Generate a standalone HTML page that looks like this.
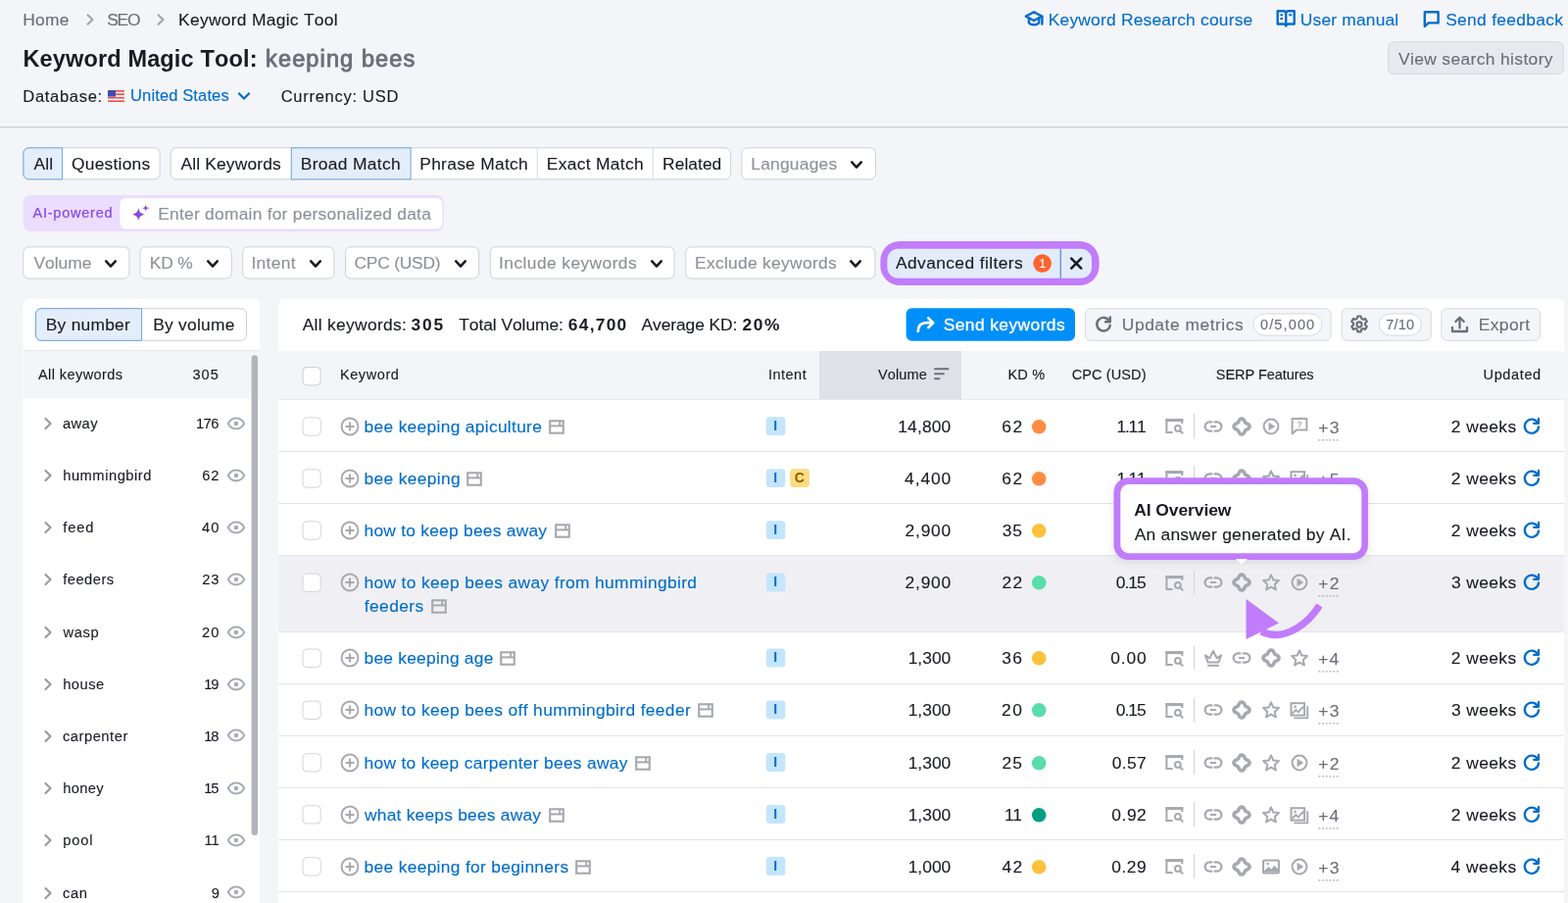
<!DOCTYPE html>
<html lang="en"><head><meta charset="utf-8"><title>Keyword Magic Tool: keeping bees</title>
<style>
html,body{margin:0;padding:0}
body{width:1600px;height:921px;overflow:hidden;background:#f4f5f9;font-family:"Liberation Sans",sans-serif;color:#191b23}
#root{will-change:transform;position:relative;width:1600px;height:921px;overflow:hidden;background:#f4f5f9}
.t{position:absolute;white-space:nowrap;line-height:1;font-size:17.4px;font-kerning:none;-webkit-text-stroke:0.12px}
.b{position:absolute;box-sizing:border-box}
.i{position:absolute;overflow:visible}

</style></head>
<body>
<div id="root">
<span class="t" style="left:23.27px;top:12px;letter-spacing:0.229px;color:#6c6e79">Home</span>
<svg class="i" style="left:83.6px;top:12.1px;" width="16" height="16" viewBox="0 0 16 16"><path d="M5.5 3.3 L10.5 8 L5.5 12.7" fill="none" stroke="#a3a5ad" stroke-width="2.1" stroke-linecap="round" stroke-linejoin="round"/></svg>
<span class="t" style="left:109.21px;top:12px;letter-spacing:-1.200px;color:#6c6e79">SEO</span>
<svg class="i" style="left:156.2px;top:12.1px;" width="16" height="16" viewBox="0 0 16 16"><path d="M5.5 3.3 L10.5 8 L5.5 12.7" fill="none" stroke="#a3a5ad" stroke-width="2.1" stroke-linecap="round" stroke-linejoin="round"/></svg>
<span class="t" style="left:182.07px;top:12px;letter-spacing:0.298px">Keyword Magic Tool</span>
<svg class="i" style="left:1044px;top:9px;" width="22" height="20" viewBox="0 0 22 20"><path d="M11 3.2 L19.2 7.6 L11 12 L2.8 7.6 Z" fill="none" stroke="#006dca" stroke-width="2.4" stroke-linejoin="round"/><path d="M5.9 10 V14.4 C7.6 16.8 14.4 16.8 16.1 14.4 V10" fill="none" stroke="#006dca" stroke-width="2.4" stroke-linejoin="round"/><path d="M19.4 8 V15.6" fill="none" stroke="#006dca" stroke-width="2.4" stroke-linecap="round"/></svg>
<span class="t" style="left:1069.77px;top:12px;letter-spacing:0.206px;color:#006dca">Keyword Research course</span>
<svg class="i" style="left:1302px;top:9px;" width="21" height="20" viewBox="0 0 21 20"><path d="M1.7 2.3 H7.6 C9.2 2.3 10.2 3.3 10.2 4.9 V17.6 C10.2 16.3 9.2 15.5 7.6 15.5 H1.7 Z M18.7 2.3 H12.8 C11.2 2.3 10.2 3.3 10.2 4.9 V17.6 C10.2 16.3 11.2 15.5 12.8 15.5 H18.7 Z" fill="none" stroke="#006dca" stroke-width="2.4" stroke-linejoin="round"/><path d="M4.4 6.3h2.6M4.4 10h2.6M13.2 6.3h3" stroke="#006dca" stroke-width="1.9" fill="none"/></svg>
<span class="t" style="left:1326.86px;top:12px;letter-spacing:0.177px;color:#006dca">User manual</span>
<svg class="i" style="left:1451px;top:9px;" width="20" height="20" viewBox="0 0 20 20"><path d="M2.8 3.2 H16.6 V14.4 H6.6 L2.8 17.9 Z" fill="none" stroke="#006dca" stroke-width="2.4" stroke-linejoin="round"/></svg>
<span class="t" style="left:1475.21px;top:12px;letter-spacing:0.306px;color:#006dca">Send feedback</span>
<span class="t" style="left:23.43px;top:49px;font-size:23.5px;letter-spacing:0.151px;font-weight:700;-webkit-text-stroke:0">Keyword Magic Tool:</span>
<span class="t" style="left:271.12px;top:49px;font-size:23.5px;letter-spacing:1.121px;color:#6c6e79;-webkit-text-stroke:0.9px #6c6e79">keeping bees</span>
<svg class="i" style="left:1414px;top:40px" width="185" height="40" viewBox="1414 40 185 40"><rect x="1416.5" y="42.7" width="178.8" height="32.8" rx="5.5" fill="#e8e9ee" stroke="#d8dae0" stroke-width="1"/></svg>
<span class="t" style="left:1426.92px;top:52px;letter-spacing:0.381px;color:#6c6e79">View search history</span>
<span class="t" style="left:23.35px;top:90px;font-size:16.5px;letter-spacing:0.693px">Database:</span>
<svg class="i" style="left:110px;top:92px" width="17" height="12" viewBox="0 0 17 12"><rect width="17" height="12" rx="1" fill="#f4f5f9"/><g fill="#ee4c4c"><rect y="0" width="17" height="1.6"/><rect y="3.4" width="17" height="1.6"/><rect y="6.9" width="17" height="1.6"/><rect y="10.4" width="17" height="1.6"/></g><rect width="8" height="6.6" fill="#3d4eb8"/></svg>
<span class="t" style="left:133.03px;top:89px;font-size:16.5px;letter-spacing:0.134px;color:#006dca">United States</span>
<svg class="i" style="left:241.1px;top:90.2px;" width="16" height="16" viewBox="0 0 16 16"><path d="M3.0 5.4 L8 10.6 L13.0 5.4" fill="none" stroke="#006dca" stroke-width="2.2" stroke-linecap="round" stroke-linejoin="round"/></svg>
<span class="t" style="left:286.66px;top:90px;font-size:16.5px;letter-spacing:0.732px">Currency: USD</span>
<svg class="i" style="left:-2px;top:127px" width="1606" height="7" viewBox="-2 127 1606 7"><rect x="0" y="129.15" width="1600" height="1" rx="0" fill="#c4c7cf"/></svg>
<svg class="i" style="left:21px;top:148px" width="146" height="39" viewBox="21 148 146 39"><rect x="23.9" y="150.8" width="139.2" height="32.1" rx="5.5" fill="#fff" stroke="#cdd0d7" stroke-width="1"/><path d="M63.6 150.8 H29.4 a5.5 5.5 0 0 0 -5.5 5.5 V177.4 a5.5 5.5 0 0 0 5.5 5.5 H63.6 Z" fill="#e4eefb" stroke="#6ba6de" stroke-width="1"/></svg>
<span class="t" style="left:34.47px;top:159px;letter-spacing:0.180px">All</span>
<span class="t" style="left:72.98px;top:159px;letter-spacing:0.239px">Questions</span>
<svg class="i" style="left:171px;top:148px" width="578" height="39" viewBox="171 148 578 39"><rect x="174.2" y="150.8" width="571.2" height="32.1" rx="5.5" fill="#fff" stroke="#cdd0d7" stroke-width="1"/><rect x="297.3" y="150.8" width="121.8" height="32.1" fill="#e4eefb" stroke="#6ba6de" stroke-width="1"/><path d="M548.4 151.3 V182.4 M666.2 151.3 V182.4" stroke="#d8dae1" stroke-width="1"/></svg>
<span class="t" style="left:184.47px;top:159px;letter-spacing:0.154px">All Keywords</span>
<span class="t" style="left:306.77px;top:159px;letter-spacing:0.331px">Broad Match</span>
<span class="t" style="left:428.27px;top:159px;letter-spacing:0.283px">Phrase Match</span>
<span class="t" style="left:557.87px;top:159px;letter-spacing:0.312px">Exact Match</span>
<span class="t" style="left:676.07px;top:159px;letter-spacing:0.046px">Related</span>
<svg class="i" style="left:754px;top:148px" width="144" height="39" viewBox="754 148 144 39"><rect x="756.8" y="150.8" width="136.7" height="32.1" rx="5.5" fill="#fff" stroke="#cdd0d7" stroke-width="1"/></svg>
<span class="t" style="left:766.27px;top:159px;letter-spacing:0.230px;color:#8e9099">Languages</span>
<svg class="i" style="left:866px;top:160px;" width="16" height="16" viewBox="0 0 16 16"><path d="M3.2 5.4 L8 10.6 L12.8 5.4" fill="none" stroke="#191b23" stroke-width="2.5" stroke-linecap="round" stroke-linejoin="round"/></svg>
<svg class="i" style="left:21px;top:197px" width="436" height="43" viewBox="21 197 436 43"><rect x="23.6" y="199.1" width="429.4" height="36.9" rx="8" fill="#ecdcfd"/></svg>
<span class="t" style="left:33.57px;top:210px;font-size:14.5px;letter-spacing:0.757px;color:#8649e1;font-weight:400;-webkit-text-stroke:0.2px #8649e1">AI-powered</span>
<svg class="i" style="left:120px;top:200px" width="335" height="37" viewBox="120 200 335 37"><rect x="122.4" y="202" width="329.1" height="31.5" rx="6" fill="#fff"/></svg>
<svg class="i" style="left:133.5px;top:208.3px" width="19" height="19" viewBox="0.6 0.4 18 18"><path d="M7.5 4 C8.2 8.3 9.2 9.3 13.5 10.5 C9.2 11.7 8.2 12.7 7.5 17 C6.8 12.7 5.8 11.7 1.5 10.5 C5.8 9.3 6.8 8.3 7.5 4 Z" fill="#8649e1"/><path d="M14.5 1 C14.9 3.3 15.4 3.8 17.8 4.4 C15.4 5 14.9 5.5 14.5 7.8 C14.1 5.5 13.6 5 11.2 4.4 C13.6 3.8 14.1 3.3 14.5 1 Z" fill="#8649e1"/></svg>
<span class="t" style="left:161.27px;top:210px;letter-spacing:0.239px;color:#8e9099">Enter domain for personalized data</span>
<svg class="i" style="left:21px;top:249px" width="115" height="39" viewBox="21 249 115 39"><rect x="23.8" y="251.9" width="108.1" height="32.2" rx="5.5" fill="#fff" stroke="#cdd0d7" stroke-width="1"/></svg>
<span class="t" style="left:34.42px;top:260px;letter-spacing:-0.009px;color:#8e9099">Volume</span>
<svg class="i" style="left:105.4px;top:261.4px;" width="16" height="16" viewBox="0 0 16 16"><path d="M3.2 5.4 L8 10.6 L12.8 5.4" fill="none" stroke="#191b23" stroke-width="2.5" stroke-linecap="round" stroke-linejoin="round"/></svg>
<svg class="i" style="left:140px;top:249px" width="100" height="39" viewBox="140 249 100 39"><rect x="142.9" y="251.9" width="93.4" height="32.2" rx="5.5" fill="#fff" stroke="#cdd0d7" stroke-width="1"/></svg>
<span class="t" style="left:152.87px;top:260px;letter-spacing:-0.210px;color:#8e9099">KD %</span>
<svg class="i" style="left:209.3px;top:261.4px;" width="16" height="16" viewBox="0 0 16 16"><path d="M3.2 5.4 L8 10.6 L12.8 5.4" fill="none" stroke="#191b23" stroke-width="2.5" stroke-linecap="round" stroke-linejoin="round"/></svg>
<svg class="i" style="left:245px;top:249px" width="100" height="39" viewBox="245 249 100 39"><rect x="247.7" y="251.9" width="93.2" height="32.2" rx="5.5" fill="#fff" stroke="#cdd0d7" stroke-width="1"/></svg>
<span class="t" style="left:256.49px;top:260px;letter-spacing:0.300px;color:#8e9099">Intent</span>
<svg class="i" style="left:314.3px;top:261.4px;" width="16" height="16" viewBox="0 0 16 16"><path d="M3.2 5.4 L8 10.6 L12.8 5.4" fill="none" stroke="#191b23" stroke-width="2.5" stroke-linecap="round" stroke-linejoin="round"/></svg>
<svg class="i" style="left:350px;top:249px" width="143" height="39" viewBox="350 249 143 39"><rect x="352.5" y="251.9" width="136.2" height="32.2" rx="5.5" fill="#fff" stroke="#cdd0d7" stroke-width="1"/></svg>
<span class="t" style="left:361.52px;top:260px;letter-spacing:-0.217px;color:#8e9099">CPC (USD)</span>
<svg class="i" style="left:461.5px;top:261.4px;" width="16" height="16" viewBox="0 0 16 16"><path d="M3.2 5.4 L8 10.6 L12.8 5.4" fill="none" stroke="#191b23" stroke-width="2.5" stroke-linecap="round" stroke-linejoin="round"/></svg>
<svg class="i" style="left:497px;top:249px" width="195" height="39" viewBox="497 249 195 39"><rect x="500.3" y="251.9" width="187.8" height="32.2" rx="5.5" fill="#fff" stroke="#cdd0d7" stroke-width="1"/></svg>
<span class="t" style="left:509.09px;top:260px;letter-spacing:0.413px;color:#8e9099">Include keywords</span>
<svg class="i" style="left:661.6px;top:261.4px;" width="16" height="16" viewBox="0 0 16 16"><path d="M3.2 5.4 L8 10.6 L12.8 5.4" fill="none" stroke="#191b23" stroke-width="2.5" stroke-linecap="round" stroke-linejoin="round"/></svg>
<svg class="i" style="left:697px;top:249px" width="200" height="39" viewBox="697 249 200 39"><rect x="699.8" y="251.9" width="193.1" height="32.2" rx="5.5" fill="#fff" stroke="#cdd0d7" stroke-width="1"/></svg>
<span class="t" style="left:709.07px;top:260px;letter-spacing:0.295px;color:#8e9099">Exclude keywords</span>
<svg class="i" style="left:865.3px;top:261.4px;" width="16" height="16" viewBox="0 0 16 16"><path d="M3.2 5.4 L8 10.6 L12.8 5.4" fill="none" stroke="#191b23" stroke-width="2.5" stroke-linecap="round" stroke-linejoin="round"/></svg>
<svg class="i" style="left:890px;top:240px" width="240" height="58" viewBox="890 240 240 58"><rect x="898.3" y="246" width="223.3" height="45" rx="20" fill="#c17cfb"/><rect x="905.4" y="253.7" width="208.6" height="30.1" rx="11" fill="#e2ebfa"/><rect x="1081.6" y="253.7" width="1.4" height="30.1" fill="#5b9bd8"/><path d="M1093.2 263.6 L1103.2 273.6 M1103.2 263.6 L1093.2 273.6" stroke="#191b23" stroke-width="2.6" stroke-linecap="round" fill="none"/><circle cx="1063.6" cy="268.6" r="9.3" fill="#ff642d"/></svg>
<span class="t" style="left:913.97px;top:260px;letter-spacing:0.398px">Advanced filters</span>
<span class="t" style="left:1060.35px;top:263px;font-size:12.5px;letter-spacing:-0.889px;color:#fff">1</span>
<svg class="i" style="left:21px;top:302px" width="248" height="642" viewBox="21 302 248 642"><rect x="23.4" y="304.5" width="241.7" height="635.5" rx="7" fill="#fff"/></svg>
<svg class="i" style="left:34px;top:312px" width="222" height="39" viewBox="34 312 222 39"><rect x="36.5" y="314.7" width="215" height="32.6" rx="5.5" fill="#fff" stroke="#cdd0d7" stroke-width="1"/><path d="M144.6 314.7 H42 a5.5 5.5 0 0 0 -5.5 5.5 V341.8 a5.5 5.5 0 0 0 5.5 5.5 H144.6 Z" fill="#e4eefb" stroke="#6ba6de" stroke-width="1"/></svg>
<span class="t" style="left:46.77px;top:323px;letter-spacing:0.247px">By number</span>
<span class="t" style="left:156.27px;top:323px;letter-spacing:0.234px">By volume</span>
<div class="b" style="left:24px;top:357px;width:241px;height:49.5px;background:#f4f5f9;border-top:1px solid #e6e7ed"></div>
<span class="t" style="left:38.97px;top:375px;font-size:14.5px;letter-spacing:0.433px">All keywords</span>
<span class="t" style="left:196.45px;top:375px;font-size:14.5px;letter-spacing:1.034px">305</span>
<svg class="i" style="left:250px;top:355px" width="20" height="505" viewBox="250 355 20 505"><rect x="256.6" y="362.3" width="6.5" height="489.7" rx="3.2" fill="#b3b4b9"/></svg>
<svg class="i" style="left:40.6px;top:424.3px;" width="16" height="16" viewBox="0 0 16 16"><path d="M5.45 3.1 L10.55 8 L5.45 12.9" fill="none" stroke="#9698a1" stroke-width="2.1" stroke-linecap="round" stroke-linejoin="round"/></svg>
<span class="t" style="left:63.88px;top:425px;font-size:14.7px;letter-spacing:0.479px">away</span>
<span class="t" style="left:199.88px;top:425px;font-size:14.7px;letter-spacing:-0.480px">176</span>
<svg class="i" style="left:231.3px;top:424.9px" width="20" height="14" viewBox="0 0 20 14"><path d="M1.8 7 C3.8 3.3 6.6 1.6 10 1.6 C13.4 1.6 16.2 3.3 18.2 7 C16.2 10.7 13.4 12.4 10 12.4 C6.6 12.4 3.8 10.7 1.8 7 Z" fill="none" stroke="#a9abb6" stroke-width="2" stroke-linejoin="round"/><circle cx="10" cy="7" r="2.3" fill="#a9abb6"/></svg>
<svg class="i" style="left:40.6px;top:477.3px;" width="16" height="16" viewBox="0 0 16 16"><path d="M5.45 3.1 L10.55 8 L5.45 12.9" fill="none" stroke="#9698a1" stroke-width="2.1" stroke-linecap="round" stroke-linejoin="round"/></svg>
<span class="t" style="left:64.18px;top:478px;font-size:14.7px;letter-spacing:0.540px">hummingbird</span>
<span class="t" style="left:206.29px;top:478px;font-size:14.7px;letter-spacing:0.900px">62</span>
<svg class="i" style="left:231.3px;top:477.9px" width="20" height="14" viewBox="0 0 20 14"><path d="M1.8 7 C3.8 3.3 6.6 1.6 10 1.6 C13.4 1.6 16.2 3.3 18.2 7 C16.2 10.7 13.4 12.4 10 12.4 C6.6 12.4 3.8 10.7 1.8 7 Z" fill="none" stroke="#a9abb6" stroke-width="2" stroke-linejoin="round"/><circle cx="10" cy="7" r="2.3" fill="#a9abb6"/></svg>
<svg class="i" style="left:40.6px;top:530.3px;" width="16" height="16" viewBox="0 0 16 16"><path d="M5.45 3.1 L10.55 8 L5.45 12.9" fill="none" stroke="#9698a1" stroke-width="2.1" stroke-linecap="round" stroke-linejoin="round"/></svg>
<span class="t" style="left:64.29px;top:531px;font-size:14.7px;letter-spacing:0.882px">feed</span>
<span class="t" style="left:206.12px;top:531px;font-size:14.7px;letter-spacing:0.900px">40</span>
<svg class="i" style="left:231.3px;top:530.9px" width="20" height="14" viewBox="0 0 20 14"><path d="M1.8 7 C3.8 3.3 6.6 1.6 10 1.6 C13.4 1.6 16.2 3.3 18.2 7 C16.2 10.7 13.4 12.4 10 12.4 C6.6 12.4 3.8 10.7 1.8 7 Z" fill="none" stroke="#a9abb6" stroke-width="2" stroke-linejoin="round"/><circle cx="10" cy="7" r="2.3" fill="#a9abb6"/></svg>
<svg class="i" style="left:40.6px;top:583.3px;" width="16" height="16" viewBox="0 0 16 16"><path d="M5.45 3.1 L10.55 8 L5.45 12.9" fill="none" stroke="#9698a1" stroke-width="2.1" stroke-linecap="round" stroke-linejoin="round"/></svg>
<span class="t" style="left:64.29px;top:584px;font-size:14.7px;letter-spacing:0.468px">feeders</span>
<span class="t" style="left:206.26px;top:584px;font-size:14.7px;letter-spacing:0.834px">23</span>
<svg class="i" style="left:231.3px;top:583.9px" width="20" height="14" viewBox="0 0 20 14"><path d="M1.8 7 C3.8 3.3 6.6 1.6 10 1.6 C13.4 1.6 16.2 3.3 18.2 7 C16.2 10.7 13.4 12.4 10 12.4 C6.6 12.4 3.8 10.7 1.8 7 Z" fill="none" stroke="#a9abb6" stroke-width="2" stroke-linejoin="round"/><circle cx="10" cy="7" r="2.3" fill="#a9abb6"/></svg>
<svg class="i" style="left:40.6px;top:637.3px;" width="16" height="16" viewBox="0 0 16 16"><path d="M5.45 3.1 L10.55 8 L5.45 12.9" fill="none" stroke="#9698a1" stroke-width="2.1" stroke-linecap="round" stroke-linejoin="round"/></svg>
<span class="t" style="left:64.52px;top:638px;font-size:14.7px;letter-spacing:0.626px">wasp</span>
<span class="t" style="left:206.12px;top:638px;font-size:14.7px;letter-spacing:0.900px">20</span>
<svg class="i" style="left:231.3px;top:637.9px" width="20" height="14" viewBox="0 0 20 14"><path d="M1.8 7 C3.8 3.3 6.6 1.6 10 1.6 C13.4 1.6 16.2 3.3 18.2 7 C16.2 10.7 13.4 12.4 10 12.4 C6.6 12.4 3.8 10.7 1.8 7 Z" fill="none" stroke="#a9abb6" stroke-width="2" stroke-linejoin="round"/><circle cx="10" cy="7" r="2.3" fill="#a9abb6"/></svg>
<svg class="i" style="left:40.6px;top:690px;" width="16" height="16" viewBox="0 0 16 16"><path d="M5.45 3.1 L10.55 8 L5.45 12.9" fill="none" stroke="#9698a1" stroke-width="2.1" stroke-linecap="round" stroke-linejoin="round"/></svg>
<span class="t" style="left:64.18px;top:691px;font-size:14.7px;letter-spacing:0.505px">house</span>
<span class="t" style="left:208.35px;top:691px;font-size:14.7px;letter-spacing:-1.200px">19</span>
<svg class="i" style="left:231.3px;top:690.6px" width="20" height="14" viewBox="0 0 20 14"><path d="M1.8 7 C3.8 3.3 6.6 1.6 10 1.6 C13.4 1.6 16.2 3.3 18.2 7 C16.2 10.7 13.4 12.4 10 12.4 C6.6 12.4 3.8 10.7 1.8 7 Z" fill="none" stroke="#a9abb6" stroke-width="2" stroke-linejoin="round"/><circle cx="10" cy="7" r="2.3" fill="#a9abb6"/></svg>
<svg class="i" style="left:40.6px;top:742.8px;" width="16" height="16" viewBox="0 0 16 16"><path d="M5.45 3.1 L10.55 8 L5.45 12.9" fill="none" stroke="#9698a1" stroke-width="2.1" stroke-linecap="round" stroke-linejoin="round"/></svg>
<span class="t" style="left:63.88px;top:744px;font-size:14.7px;letter-spacing:0.546px">carpenter</span>
<span class="t" style="left:208.29px;top:744px;font-size:14.7px;letter-spacing:-1.200px">18</span>
<svg class="i" style="left:231.3px;top:743.4px" width="20" height="14" viewBox="0 0 20 14"><path d="M1.8 7 C3.8 3.3 6.6 1.6 10 1.6 C13.4 1.6 16.2 3.3 18.2 7 C16.2 10.7 13.4 12.4 10 12.4 C6.6 12.4 3.8 10.7 1.8 7 Z" fill="none" stroke="#a9abb6" stroke-width="2" stroke-linejoin="round"/><circle cx="10" cy="7" r="2.3" fill="#a9abb6"/></svg>
<svg class="i" style="left:40.6px;top:796.3px;" width="16" height="16" viewBox="0 0 16 16"><path d="M5.45 3.1 L10.55 8 L5.45 12.9" fill="none" stroke="#9698a1" stroke-width="2.1" stroke-linecap="round" stroke-linejoin="round"/></svg>
<span class="t" style="left:64.18px;top:797px;font-size:14.7px;letter-spacing:0.349px">honey</span>
<span class="t" style="left:208.27px;top:797px;font-size:14.7px;letter-spacing:-1.200px">15</span>
<svg class="i" style="left:231.3px;top:796.9px" width="20" height="14" viewBox="0 0 20 14"><path d="M1.8 7 C3.8 3.3 6.6 1.6 10 1.6 C13.4 1.6 16.2 3.3 18.2 7 C16.2 10.7 13.4 12.4 10 12.4 C6.6 12.4 3.8 10.7 1.8 7 Z" fill="none" stroke="#a9abb6" stroke-width="2" stroke-linejoin="round"/><circle cx="10" cy="7" r="2.3" fill="#a9abb6"/></svg>
<svg class="i" style="left:40.6px;top:849.3px;" width="16" height="16" viewBox="0 0 16 16"><path d="M5.45 3.1 L10.55 8 L5.45 12.9" fill="none" stroke="#9698a1" stroke-width="2.1" stroke-linecap="round" stroke-linejoin="round"/></svg>
<span class="t" style="left:64.25px;top:850px;font-size:14.7px;letter-spacing:0.846px">pool</span>
<span class="t" style="left:208.57px;top:850px;font-size:14.7px;letter-spacing:-1.200px">11</span>
<svg class="i" style="left:231.3px;top:849.9px" width="20" height="14" viewBox="0 0 20 14"><path d="M1.8 7 C3.8 3.3 6.6 1.6 10 1.6 C13.4 1.6 16.2 3.3 18.2 7 C16.2 10.7 13.4 12.4 10 12.4 C6.6 12.4 3.8 10.7 1.8 7 Z" fill="none" stroke="#a9abb6" stroke-width="2" stroke-linejoin="round"/><circle cx="10" cy="7" r="2.3" fill="#a9abb6"/></svg>
<svg class="i" style="left:40.6px;top:902.8px;" width="16" height="16" viewBox="0 0 16 16"><path d="M5.45 3.1 L10.55 8 L5.45 12.9" fill="none" stroke="#9698a1" stroke-width="2.1" stroke-linecap="round" stroke-linejoin="round"/></svg>
<span class="t" style="left:63.88px;top:904px;font-size:14.7px;letter-spacing:0.739px">can</span>
<span class="t" style="left:215.72px;top:904px;font-size:14.7px;letter-spacing:0.900px">9</span>
<svg class="i" style="left:231.3px;top:903.4px" width="20" height="14" viewBox="0 0 20 14"><path d="M1.8 7 C3.8 3.3 6.6 1.6 10 1.6 C13.4 1.6 16.2 3.3 18.2 7 C16.2 10.7 13.4 12.4 10 12.4 C6.6 12.4 3.8 10.7 1.8 7 Z" fill="none" stroke="#a9abb6" stroke-width="2" stroke-linejoin="round"/><circle cx="10" cy="7" r="2.3" fill="#a9abb6"/></svg>
<svg class="i" style="left:281px;top:302px" width="1319" height="642" viewBox="281 302 1319 642"><rect x="283.8" y="304.5" width="1312.3" height="635.5" rx="7" fill="#fff"/></svg>
<span class="t" style="left:308.67px;top:323px;letter-spacing:0.319px">All keywords:</span>
<span class="t" style="left:419.60px;top:323px;letter-spacing:1.726px;font-weight:700;-webkit-text-stroke:0">305</span>
<span class="t" style="left:468.21px;top:323px;letter-spacing:-0.047px">Total Volume:</span>
<span class="t" style="left:579.86px;top:323px;letter-spacing:1.246px;font-weight:700;-webkit-text-stroke:0">64,700</span>
<span class="t" style="left:654.57px;top:323px;letter-spacing:-0.083px">Average KD:</span>
<span class="t" style="left:757.40px;top:323px;letter-spacing:1.668px;font-weight:700;-webkit-text-stroke:0">20%</span>
<svg class="i" style="left:922px;top:312px" width="179" height="39" viewBox="922 312 179 39"><rect x="924.6" y="314.2" width="172.4" height="33.6" rx="6" fill="#008ff8"/></svg>
<svg class="i" style="left:934px;top:321px" width="21" height="20" viewBox="0 0 21 20"><path d="M2.8 17 C2.8 11 6 8.2 12 8.2 H17.5" fill="none" stroke="#fff" stroke-width="2.7" stroke-linecap="round"/><path d="M13.3 3.4 L18.2 8.2 L13.3 13" fill="none" stroke="#fff" stroke-width="2.7" stroke-linecap="round" stroke-linejoin="round"/></svg>
<span class="t" style="left:962.71px;top:323px;letter-spacing:0.421px;color:#fff;-webkit-text-stroke:0.3px #fff">Send keywords</span>
<svg class="i" style="left:1105px;top:312px" width="257" height="39" viewBox="1105 312 257 39"><rect x="1107.5" y="314.7" width="250.6" height="32.6" rx="5.5" fill="#f4f5f9" stroke="#d8dae0" stroke-width="1"/></svg>
<svg class="i" style="left:1117px;top:322px" width="18" height="18" viewBox="0 0 18 18"><path d="M15 5.4 A6.8 6.8 0 1 0 15.8 9.6" fill="none" stroke="#6c6e79" stroke-width="2.4" stroke-linecap="round"/><path d="M15.8 1.4 V6.2 H11" fill="none" stroke="#6c6e79" stroke-width="2.4" stroke-linecap="round" stroke-linejoin="round"/></svg>
<span class="t" style="left:1144.86px;top:323px;letter-spacing:0.528px;color:#6c6e79">Update metrics</span>
<svg class="i" style="left:1276px;top:317px" width="77" height="29" viewBox="1276 317 77 29"><rect x="1279" y="320.1" width="69.8" height="22" rx="11" fill="#fff" stroke="#d8dae0" stroke-width="1"/></svg>
<span class="t" style="left:1285.93px;top:324px;font-size:14.5px;letter-spacing:1.142px;color:#6c6e79">0/5,000</span>
<svg class="i" style="left:1366px;top:312px" width="98" height="39" viewBox="1366 312 98 39"><rect x="1369.1" y="314.7" width="91.2" height="32.6" rx="5.5" fill="#f4f5f9" stroke="#d8dae0" stroke-width="1"/></svg>
<svg class="i" style="left:1377px;top:321px" width="20" height="20" viewBox="0 0 20 20"><path d="M8.3 1.5 h3.4 l0.5 2.4 1.6 0.9 2.3-0.8 1.7 2.9 -1.8 1.6 v1.9 l1.8 1.6 -1.7 2.9 -2.3-0.8 -1.6 0.9 -0.5 2.4 h-3.4 l-0.5-2.4 -1.6-0.9 -2.3 0.8 -1.7-2.9 1.8-1.6 v-1.9 l-1.8-1.6 1.7-2.9 2.3 0.8 1.6-0.9 z" fill="none" stroke="#6c6e79" stroke-width="2.1" stroke-linejoin="round"/><circle cx="10" cy="10" r="2.6" fill="none" stroke="#6c6e79" stroke-width="2.1"/></svg>
<svg class="i" style="left:1404px;top:317px" width="50" height="29" viewBox="1404 317 50 29"><rect x="1407.3" y="320.1" width="43" height="22" rx="11" fill="#fff" stroke="#d8dae0" stroke-width="1"/></svg>
<span class="t" style="left:1414.26px;top:324px;font-size:14.5px;letter-spacing:0.230px;color:#6c6e79">7/10</span>
<svg class="i" style="left:1468px;top:312px" width="108" height="39" viewBox="1468 312 108 39"><rect x="1470.8" y="314.7" width="100.7" height="32.6" rx="5.5" fill="#f4f5f9" stroke="#d8dae0" stroke-width="1"/></svg>
<svg class="i" style="left:1480px;top:322px" width="19" height="18" viewBox="0 0 19 18"><path d="M2 12 V16 H17 V12" fill="none" stroke="#6c6e79" stroke-width="2.3" stroke-linejoin="round" stroke-linecap="round"/><path d="M9.5 12.5 V2.2 M5.3 6 L9.5 1.8 L13.7 6" fill="none" stroke="#6c6e79" stroke-width="2.3" stroke-linejoin="round" stroke-linecap="round"/></svg>
<span class="t" style="left:1508.67px;top:323px;letter-spacing:0.433px;color:#6c6e79">Export</span>
<div class="b" style="left:284px;top:357.5px;width:1312px;height:50px;background:#f4f5f9"></div>
<div class="b" style="left:835.5px;top:357.5px;width:145px;height:50px;background:#e0e1e8"></div>
<div class="b" style="left:284px;top:407px;width:1312px;height:1px;background:#e9eaef"></div>
<svg class="i" style="left:306px;top:372px" width="25" height="25" viewBox="306 372 25 25"><rect x="309" y="374.5" width="18.2" height="18.4" rx="4" fill="#fff" stroke="#c9ccd3" stroke-width="1"/></svg>
<span class="t" style="left:346.91px;top:375px;font-size:14.5px;letter-spacing:0.602px">Keyword</span>
<span class="t" style="left:783.96px;top:375px;font-size:14.5px;letter-spacing:0.493px">Intent</span>
<span class="t" style="left:895.94px;top:375px;font-size:14.5px;letter-spacing:0.149px">Volume</span>
<svg class="i" style="left:953px;top:374px" width="16" height="14" viewBox="0 0 16 14"><path d="M1 2.3 H14.5 M1 7.3 H10 M1 12.3 H5.5" stroke="#6c6e79" stroke-width="1.9" stroke-linecap="round" fill="none"/></svg>
<span class="t" style="left:1028.51px;top:375px;font-size:14.5px;letter-spacing:0.181px">KD %</span>
<span class="t" style="left:1093.76px;top:375px;font-size:14.5px;letter-spacing:0.103px">CPC (USD)</span>
<span class="t" style="left:1240.84px;top:375px;font-size:14.5px;letter-spacing:-0.079px">SERP Features</span>
<span class="t" style="left:1513.58px;top:375px;font-size:14.5px;letter-spacing:0.622px">Updated</span>
<div class="b" style="left:284px;top:460.0px;width:1312px;height:1px;background:#e3e4ea"></div>
<svg class="i" style="left:306px;top:423px" width="25" height="25" viewBox="306 423 25 25"><rect x="309" y="425.8" width="18.2" height="18.4" rx="4" fill="#fff" stroke="#d3d5dc" stroke-width="1"/></svg>
<svg class="i" style="left:346.6px;top:425.1px" width="20" height="20" viewBox="0 0 20 20"><circle cx="10" cy="10" r="8.45" fill="none" stroke="#a7a8af" stroke-width="1.9"/><path d="M10 5.5 V14.5 M5.5 10 H14.5" stroke="#a7a8af" stroke-width="1.9" fill="none"/></svg>
<span class="t" style="left:371.58px;top:427px;letter-spacing:0.300px;color:#006dca">bee keeping apiculture</span>
<svg class="i" style="left:559.9px;top:428.0px" width="16" height="15" viewBox="0 0 16 15"><rect x="1.2" y="1.3" width="13.6" height="12.4" fill="none" stroke="#a7a8af" stroke-width="2.1"/><path d="M1 6.4 H15" stroke="#a7a8af" stroke-width="2"/><path d="M11.2 1.3 V6.4" stroke="#a7a8af" stroke-width="1.9"/></svg>
<svg class="i" style="left:779px;top:423px" width="26" height="25" viewBox="779 423 26 25"><rect x="781.8" y="425.3" width="19.5" height="18.8" rx="3.5" fill="#c4e5fe"/></svg>
<span class="t" style="left:789.16px;top:427px;font-size:14px;letter-spacing:0.783px;color:#006dca;font-weight:700;-webkit-text-stroke:0">I</span>
<span class="t" style="left:916.27px;top:427px;letter-spacing:0.157px">14,800</span>
<span class="t" style="left:1022.22px;top:427px;letter-spacing:1.500px">62</span>
<svg class="i" style="left:1050px;top:424.7px" width="20" height="20" viewBox="-10 -10 20 20"><circle cx="0.2" cy="0.3" r="7.25" fill="#ff8c43"/></svg>
<span class="t" style="left:1139.48px;top:427px;letter-spacing:-1.200px">1.11</span>
<svg class="i" style="left:1189.0px;top:427.4px" width="19" height="16" viewBox="0 0 19 16"><path d="M7.6 14.1 H1.4 V1.6 H17.3 V5" fill="none" stroke="#a7a8af" stroke-width="2"/><path d="M0.4 1.6 H18.3" stroke="#a7a8af" stroke-width="3" fill="none"/><circle cx="12.9" cy="9.9" r="2.9" fill="none" stroke="#a7a8af" stroke-width="2"/><path d="M15.1 12.2 L17.6 14.7" stroke="#a7a8af" stroke-width="2.1" stroke-linecap="round"/></svg>
<div class="b" style="left:1218.3px;top:422.2px;width:1px;height:24.5px;background:#d1d4db"></div>
<svg class="i" style="left:1228.1px;top:428.9px" width="20" height="12" viewBox="0 0 20 12"><path d="M8.4 1.4 H6.2 A4.6 4.6 0 0 0 6.2 10.6 H8.4 M11.6 1.4 H13.8 A4.6 4.6 0 0 1 13.8 10.6 H11.6 M7.8 6 H12.2" fill="none" stroke="#a7a8af" stroke-width="2.2" stroke-linecap="round"/></svg>
<svg class="i" style="left:1257.32px;top:424.9px" width="20" height="20" viewBox="-9.6 -9.6 19.2 19.2"><path d="M0.0 -7.7 L1.2 -7.4 L2.1 -6.5 L2.8 -5.4 L3.2 -4.4 L3.7 -3.7 L4.4 -3.2 L5.4 -2.8 L6.5 -2.1 L7.4 -1.2 L7.7 0 L7.4 1.2 L6.5 2.1 L5.4 2.8 L4.4 3.2 L3.7 3.7 L3.2 4.4 L2.8 5.4 L2.1 6.5 L1.2 7.4 L0.0 7.7 L-1.2 7.4 L-2.1 6.5 L-2.8 5.4 L-3.2 4.4 L-3.7 3.7 L-4.4 3.2 L-5.4 2.8 L-6.5 2.1 L-7.4 1.2 L-7.7 0.0 L-7.4 -1.2 L-6.5 -2.1 L-5.4 -2.8 L-4.4 -3.2 L-3.7 -3.7 L-3.2 -4.4 L-2.8 -5.4 L-2.1 -6.5 L-1.2 -7.4 Z" fill="none" stroke="#a7a8af" stroke-width="3.4" stroke-linejoin="round"/></svg>
<svg class="i" style="left:1286.54px;top:424.9px" width="20" height="20" viewBox="0 0 20 20"><circle cx="10" cy="10" r="7.4" fill="none" stroke="#a7a8af" stroke-width="2"/><path d="M7.9 6.2 L13.7 10 L7.9 13.8 Z" fill="#a7a8af" stroke="#a7a8af" stroke-width="0.6" stroke-linejoin="round"/></svg>
<svg class="i" style="left:1315.76px;top:424.9px" width="20" height="20" viewBox="0 0 20 20"><path d="M2.6 1.9 H17.4 V13.6 H7 L2.6 17.4 Z" fill="none" stroke="#a7a8af" stroke-width="2" stroke-linejoin="round"/><text x="10" y="10.9" font-size="8.6" font-weight="700" text-anchor="middle" fill="#a7a8af" font-family="Liberation Sans, sans-serif">?</text></svg>
<span class="t" style="left:1345.15px;top:428px;letter-spacing:1.376px;color:#6c6e79">+3</span>
<svg class="i" style="left:1344px;top:446.7px" width="25" height="4" viewBox="0 0 25 4"><path d="M1.2 1.9 H23.4" stroke="#b0b2ba" stroke-width="1.3" stroke-dasharray="2.1 1.6" fill="none"/></svg>
<span class="t" style="left:1480.82px;top:427px;letter-spacing:0.429px">2 weeks</span>
<svg class="i" style="left:1552.5px;top:425.0px" width="20" height="20" viewBox="0 0 20 20"><path d="M16.1 6.2 A7.1 7.1 0 1 0 17 10.4" fill="none" stroke="#006dca" stroke-width="2.3" stroke-linecap="round"/><path d="M17 1.9 V6.8 H12.1" fill="none" stroke="#006dca" stroke-width="2.3" stroke-linecap="round" stroke-linejoin="round"/></svg>
<div class="b" style="left:284px;top:513.0px;width:1312px;height:1px;background:#e3e4ea"></div>
<svg class="i" style="left:306px;top:476px" width="25" height="25" viewBox="306 476 25 25"><rect x="309" y="478.8" width="18.2" height="18.4" rx="4" fill="#fff" stroke="#d3d5dc" stroke-width="1"/></svg>
<svg class="i" style="left:346.6px;top:478.1px" width="20" height="20" viewBox="0 0 20 20"><circle cx="10" cy="10" r="8.45" fill="none" stroke="#a7a8af" stroke-width="1.9"/><path d="M10 5.5 V14.5 M5.5 10 H14.5" stroke="#a7a8af" stroke-width="1.9" fill="none"/></svg>
<span class="t" style="left:371.58px;top:480px;letter-spacing:0.333px;color:#006dca">bee keeping</span>
<svg class="i" style="left:476.3px;top:481.0px" width="16" height="15" viewBox="0 0 16 15"><rect x="1.2" y="1.3" width="13.6" height="12.4" fill="none" stroke="#a7a8af" stroke-width="2.1"/><path d="M1 6.4 H15" stroke="#a7a8af" stroke-width="2"/><path d="M11.2 1.3 V6.4" stroke="#a7a8af" stroke-width="1.9"/></svg>
<svg class="i" style="left:779px;top:476px" width="26" height="25" viewBox="779 476 26 25"><rect x="781.8" y="478.3" width="19.5" height="18.8" rx="3.5" fill="#c4e5fe"/></svg>
<span class="t" style="left:789.16px;top:480px;font-size:14px;letter-spacing:0.783px;color:#006dca;font-weight:700;-webkit-text-stroke:0">I</span>
<svg class="i" style="left:804px;top:476px" width="26" height="25" viewBox="804 476 26 25"><rect x="806.2" y="478.3" width="19.8" height="18.8" rx="3.5" fill="#fbdc80"/></svg>
<span class="t" style="left:810.63px;top:480px;font-size:14px;letter-spacing:0.447px;color:#935700;font-weight:700;-webkit-text-stroke:0">C</span>
<span class="t" style="left:923.10px;top:480px;letter-spacing:0.909px">4,400</span>
<span class="t" style="left:1022.22px;top:480px;letter-spacing:1.500px">62</span>
<svg class="i" style="left:1050px;top:477.7px" width="20" height="20" viewBox="-10 -10 20 20"><circle cx="0.2" cy="0.3" r="7.25" fill="#ff8c43"/></svg>
<span class="t" style="left:1139.48px;top:480px;letter-spacing:-1.200px">1.11</span>
<svg class="i" style="left:1189.0px;top:480.4px" width="19" height="16" viewBox="0 0 19 16"><path d="M7.6 14.1 H1.4 V1.6 H17.3 V5" fill="none" stroke="#a7a8af" stroke-width="2"/><path d="M0.4 1.6 H18.3" stroke="#a7a8af" stroke-width="3" fill="none"/><circle cx="12.9" cy="9.9" r="2.9" fill="none" stroke="#a7a8af" stroke-width="2"/><path d="M15.1 12.2 L17.6 14.7" stroke="#a7a8af" stroke-width="2.1" stroke-linecap="round"/></svg>
<div class="b" style="left:1218.3px;top:475.2px;width:1px;height:24.5px;background:#d1d4db"></div>
<svg class="i" style="left:1228.1px;top:481.9px" width="20" height="12" viewBox="0 0 20 12"><path d="M8.4 1.4 H6.2 A4.6 4.6 0 0 0 6.2 10.6 H8.4 M11.6 1.4 H13.8 A4.6 4.6 0 0 1 13.8 10.6 H11.6 M7.8 6 H12.2" fill="none" stroke="#a7a8af" stroke-width="2.2" stroke-linecap="round"/></svg>
<svg class="i" style="left:1257.32px;top:477.9px" width="20" height="20" viewBox="-9.6 -9.6 19.2 19.2"><path d="M0.0 -7.7 L1.2 -7.4 L2.1 -6.5 L2.8 -5.4 L3.2 -4.4 L3.7 -3.7 L4.4 -3.2 L5.4 -2.8 L6.5 -2.1 L7.4 -1.2 L7.7 0 L7.4 1.2 L6.5 2.1 L5.4 2.8 L4.4 3.2 L3.7 3.7 L3.2 4.4 L2.8 5.4 L2.1 6.5 L1.2 7.4 L0.0 7.7 L-1.2 7.4 L-2.1 6.5 L-2.8 5.4 L-3.2 4.4 L-3.7 3.7 L-4.4 3.2 L-5.4 2.8 L-6.5 2.1 L-7.4 1.2 L-7.7 0.0 L-7.4 -1.2 L-6.5 -2.1 L-5.4 -2.8 L-4.4 -3.2 L-3.7 -3.7 L-3.2 -4.4 L-2.8 -5.4 L-2.1 -6.5 L-1.2 -7.4 Z" fill="none" stroke="#a7a8af" stroke-width="3.4" stroke-linejoin="round"/></svg>
<svg class="i" style="left:1286.54px;top:477.9px" width="20" height="20" viewBox="0 0 20 20"><path d="M10 2.3 L12.3 7.5 L17.9 8.1 L13.7 11.9 L14.9 17.4 L10 14.6 L5.1 17.4 L6.3 11.9 L2.1 8.1 L7.7 7.5 Z" fill="none" stroke="#a7a8af" stroke-width="2" stroke-linejoin="round"/></svg>
<svg class="i" style="left:1315.76px;top:477.9px" width="20" height="20" viewBox="0 0 20 20"><rect x="1.5" y="3.2" width="13.6" height="12.4" fill="none" stroke="#a7a8af" stroke-width="2"/><path d="M2.4 14 L6.4 10 L8.8 12.4 L13.2 7.4 L14.6 8.8" fill="none" stroke="#a7a8af" stroke-width="1.8"/><circle cx="5.6" cy="6.9" r="1.3" fill="#a7a8af"/><path d="M4.4 18.4 H18.2 V6.2" fill="none" stroke="#a7a8af" stroke-width="1.9"/></svg>
<span class="t" style="left:1345.15px;top:481px;letter-spacing:1.342px;color:#6c6e79">+5</span>
<svg class="i" style="left:1344px;top:499.7px" width="25" height="4" viewBox="0 0 25 4"><path d="M1.2 1.9 H23.4" stroke="#b0b2ba" stroke-width="1.3" stroke-dasharray="2.1 1.6" fill="none"/></svg>
<span class="t" style="left:1480.82px;top:480px;letter-spacing:0.429px">2 weeks</span>
<svg class="i" style="left:1552.5px;top:478.0px" width="20" height="20" viewBox="0 0 20 20"><path d="M16.1 6.2 A7.1 7.1 0 1 0 17 10.4" fill="none" stroke="#006dca" stroke-width="2.3" stroke-linecap="round"/><path d="M17 1.9 V6.8 H12.1" fill="none" stroke="#006dca" stroke-width="2.3" stroke-linecap="round" stroke-linejoin="round"/></svg>
<div class="b" style="left:284px;top:566.0px;width:1312px;height:1px;background:#e3e4ea"></div>
<svg class="i" style="left:306px;top:529px" width="25" height="25" viewBox="306 529 25 25"><rect x="309" y="531.8" width="18.2" height="18.4" rx="4" fill="#fff" stroke="#d3d5dc" stroke-width="1"/></svg>
<svg class="i" style="left:346.6px;top:531.1px" width="20" height="20" viewBox="0 0 20 20"><circle cx="10" cy="10" r="8.45" fill="none" stroke="#a7a8af" stroke-width="1.9"/><path d="M10 5.5 V14.5 M5.5 10 H14.5" stroke="#a7a8af" stroke-width="1.9" fill="none"/></svg>
<span class="t" style="left:371.49px;top:533px;letter-spacing:0.240px;color:#006dca">how to keep bees away</span>
<svg class="i" style="left:565.8px;top:534.0px" width="16" height="15" viewBox="0 0 16 15"><rect x="1.2" y="1.3" width="13.6" height="12.4" fill="none" stroke="#a7a8af" stroke-width="2.1"/><path d="M1 6.4 H15" stroke="#a7a8af" stroke-width="2"/><path d="M11.2 1.3 V6.4" stroke="#a7a8af" stroke-width="1.9"/></svg>
<svg class="i" style="left:779px;top:529px" width="26" height="25" viewBox="779 529 26 25"><rect x="781.8" y="531.3" width="19.5" height="18.8" rx="3.5" fill="#c4e5fe"/></svg>
<span class="t" style="left:789.16px;top:533px;font-size:14px;letter-spacing:0.783px;color:#006dca;font-weight:700;-webkit-text-stroke:0">I</span>
<span class="t" style="left:923.62px;top:533px;letter-spacing:0.778px">2,900</span>
<span class="t" style="left:1022.84px;top:533px;letter-spacing:0.739px">35</span>
<svg class="i" style="left:1050px;top:530.7px" width="20" height="20" viewBox="-10 -10 20 20"><circle cx="0.2" cy="0.3" r="7.25" fill="#fdc23c"/></svg>
<span class="t" style="left:1139.48px;top:533px;letter-spacing:-1.200px">1.11</span>
<svg class="i" style="left:1189.0px;top:533.4px" width="19" height="16" viewBox="0 0 19 16"><path d="M7.6 14.1 H1.4 V1.6 H17.3 V5" fill="none" stroke="#a7a8af" stroke-width="2"/><path d="M0.4 1.6 H18.3" stroke="#a7a8af" stroke-width="3" fill="none"/><circle cx="12.9" cy="9.9" r="2.9" fill="none" stroke="#a7a8af" stroke-width="2"/><path d="M15.1 12.2 L17.6 14.7" stroke="#a7a8af" stroke-width="2.1" stroke-linecap="round"/></svg>
<div class="b" style="left:1218.3px;top:528.2px;width:1px;height:24.5px;background:#d1d4db"></div>
<svg class="i" style="left:1228.1px;top:534.9px" width="20" height="12" viewBox="0 0 20 12"><path d="M8.4 1.4 H6.2 A4.6 4.6 0 0 0 6.2 10.6 H8.4 M11.6 1.4 H13.8 A4.6 4.6 0 0 1 13.8 10.6 H11.6 M7.8 6 H12.2" fill="none" stroke="#a7a8af" stroke-width="2.2" stroke-linecap="round"/></svg>
<svg class="i" style="left:1257.32px;top:530.9px" width="20" height="20" viewBox="-9.6 -9.6 19.2 19.2"><path d="M0.0 -7.7 L1.2 -7.4 L2.1 -6.5 L2.8 -5.4 L3.2 -4.4 L3.7 -3.7 L4.4 -3.2 L5.4 -2.8 L6.5 -2.1 L7.4 -1.2 L7.7 0 L7.4 1.2 L6.5 2.1 L5.4 2.8 L4.4 3.2 L3.7 3.7 L3.2 4.4 L2.8 5.4 L2.1 6.5 L1.2 7.4 L0.0 7.7 L-1.2 7.4 L-2.1 6.5 L-2.8 5.4 L-3.2 4.4 L-3.7 3.7 L-4.4 3.2 L-5.4 2.8 L-6.5 2.1 L-7.4 1.2 L-7.7 0.0 L-7.4 -1.2 L-6.5 -2.1 L-5.4 -2.8 L-4.4 -3.2 L-3.7 -3.7 L-3.2 -4.4 L-2.8 -5.4 L-2.1 -6.5 L-1.2 -7.4 Z" fill="none" stroke="#a7a8af" stroke-width="3.4" stroke-linejoin="round"/></svg>
<svg class="i" style="left:1286.54px;top:530.9px" width="20" height="20" viewBox="0 0 20 20"><path d="M10 2.3 L12.3 7.5 L17.9 8.1 L13.7 11.9 L14.9 17.4 L10 14.6 L5.1 17.4 L6.3 11.9 L2.1 8.1 L7.7 7.5 Z" fill="none" stroke="#a7a8af" stroke-width="2" stroke-linejoin="round"/></svg>
<svg class="i" style="left:1315.76px;top:530.9px" width="20" height="20" viewBox="0 0 20 20"><circle cx="10" cy="10" r="7.4" fill="none" stroke="#a7a8af" stroke-width="2"/><path d="M7.9 6.2 L13.7 10 L7.9 13.8 Z" fill="#a7a8af" stroke="#a7a8af" stroke-width="0.6" stroke-linejoin="round"/></svg>
<span class="t" style="left:1345.15px;top:534px;letter-spacing:1.376px;color:#6c6e79">+3</span>
<svg class="i" style="left:1344px;top:552.7px" width="25" height="4" viewBox="0 0 25 4"><path d="M1.2 1.9 H23.4" stroke="#b0b2ba" stroke-width="1.3" stroke-dasharray="2.1 1.6" fill="none"/></svg>
<span class="t" style="left:1480.82px;top:533px;letter-spacing:0.429px">2 weeks</span>
<svg class="i" style="left:1552.5px;top:531.0px" width="20" height="20" viewBox="0 0 20 20"><path d="M16.1 6.2 A7.1 7.1 0 1 0 17 10.4" fill="none" stroke="#006dca" stroke-width="2.3" stroke-linecap="round"/><path d="M17 1.9 V6.8 H12.1" fill="none" stroke="#006dca" stroke-width="2.3" stroke-linecap="round" stroke-linejoin="round"/></svg>
<div class="b" style="left:284px;top:567px;width:1312px;height:77px;background:#f0f0f4"></div>
<div class="b" style="left:284px;top:643.5px;width:1312px;height:1px;background:#e3e4ea"></div>
<svg class="i" style="left:306px;top:582px" width="25" height="26" viewBox="306 582 25 26"><rect x="309" y="585.1" width="18.2" height="18.4" rx="4" fill="#fff" stroke="#d3d5dc" stroke-width="1"/></svg>
<svg class="i" style="left:346.6px;top:584.4px" width="20" height="20" viewBox="0 0 20 20"><circle cx="10" cy="10" r="8.45" fill="none" stroke="#a7a8af" stroke-width="1.9"/><path d="M10 5.5 V14.5 M5.5 10 H14.5" stroke="#a7a8af" stroke-width="1.9" fill="none"/></svg>
<span class="t" style="left:371.49px;top:586px;letter-spacing:0.347px;color:#006dca">how to keep bees away from hummingbird</span>
<span class="t" style="left:371.75px;top:610px;letter-spacing:0.406px;color:#006dca">feeders</span>
<svg class="i" style="left:439.8px;top:611.3px" width="16" height="15" viewBox="0 0 16 15"><rect x="1.2" y="1.3" width="13.6" height="12.4" fill="none" stroke="#a7a8af" stroke-width="2.1"/><path d="M1 6.4 H15" stroke="#a7a8af" stroke-width="2"/><path d="M11.2 1.3 V6.4" stroke="#a7a8af" stroke-width="1.9"/></svg>
<svg class="i" style="left:779px;top:582px" width="26" height="25" viewBox="779 582 26 25"><rect x="781.8" y="584.6" width="19.5" height="18.8" rx="3.5" fill="#c4e5fe"/></svg>
<span class="t" style="left:789.16px;top:586px;font-size:14px;letter-spacing:0.783px;color:#006dca;font-weight:700;-webkit-text-stroke:0">I</span>
<span class="t" style="left:923.62px;top:586px;letter-spacing:0.778px">2,900</span>
<span class="t" style="left:1022.62px;top:586px;letter-spacing:1.096px">22</span>
<svg class="i" style="left:1050px;top:584px" width="20" height="20" viewBox="-10 -10 20 20"><circle cx="0.2" cy="0.3" r="7.25" fill="#59ddaa"/></svg>
<span class="t" style="left:1138.82px;top:586px;letter-spacing:-1.018px">0.15</span>
<svg class="i" style="left:1189.0px;top:586.7px" width="19" height="16" viewBox="0 0 19 16"><path d="M7.6 14.1 H1.4 V1.6 H17.3 V5" fill="none" stroke="#a7a8af" stroke-width="2"/><path d="M0.4 1.6 H18.3" stroke="#a7a8af" stroke-width="3" fill="none"/><circle cx="12.9" cy="9.9" r="2.9" fill="none" stroke="#a7a8af" stroke-width="2"/><path d="M15.1 12.2 L17.6 14.7" stroke="#a7a8af" stroke-width="2.1" stroke-linecap="round"/></svg>
<div class="b" style="left:1218.3px;top:581.5px;width:1px;height:24.5px;background:#d1d4db"></div>
<svg class="i" style="left:1228.1px;top:588.2px" width="20" height="12" viewBox="0 0 20 12"><path d="M8.4 1.4 H6.2 A4.6 4.6 0 0 0 6.2 10.6 H8.4 M11.6 1.4 H13.8 A4.6 4.6 0 0 1 13.8 10.6 H11.6 M7.8 6 H12.2" fill="none" stroke="#a7a8af" stroke-width="2.2" stroke-linecap="round"/></svg>
<svg class="i" style="left:1257.32px;top:584.2px" width="20" height="20" viewBox="-9.6 -9.6 19.2 19.2"><path d="M0.0 -7.7 L1.2 -7.4 L2.1 -6.5 L2.8 -5.4 L3.2 -4.4 L3.7 -3.7 L4.4 -3.2 L5.4 -2.8 L6.5 -2.1 L7.4 -1.2 L7.7 0 L7.4 1.2 L6.5 2.1 L5.4 2.8 L4.4 3.2 L3.7 3.7 L3.2 4.4 L2.8 5.4 L2.1 6.5 L1.2 7.4 L0.0 7.7 L-1.2 7.4 L-2.1 6.5 L-2.8 5.4 L-3.2 4.4 L-3.7 3.7 L-4.4 3.2 L-5.4 2.8 L-6.5 2.1 L-7.4 1.2 L-7.7 0.0 L-7.4 -1.2 L-6.5 -2.1 L-5.4 -2.8 L-4.4 -3.2 L-3.7 -3.7 L-3.2 -4.4 L-2.8 -5.4 L-2.1 -6.5 L-1.2 -7.4 Z" fill="none" stroke="#a7a8af" stroke-width="3.4" stroke-linejoin="round"/></svg>
<svg class="i" style="left:1286.54px;top:584.2px" width="20" height="20" viewBox="0 0 20 20"><path d="M10 2.3 L12.3 7.5 L17.9 8.1 L13.7 11.9 L14.9 17.4 L10 14.6 L5.1 17.4 L6.3 11.9 L2.1 8.1 L7.7 7.5 Z" fill="none" stroke="#a7a8af" stroke-width="2" stroke-linejoin="round"/></svg>
<svg class="i" style="left:1315.76px;top:584.2px" width="20" height="20" viewBox="0 0 20 20"><circle cx="10" cy="10" r="7.4" fill="none" stroke="#a7a8af" stroke-width="2"/><path d="M7.9 6.2 L13.7 10 L7.9 13.8 Z" fill="#a7a8af" stroke="#a7a8af" stroke-width="0.6" stroke-linejoin="round"/></svg>
<span class="t" style="left:1345.15px;top:587px;letter-spacing:1.486px;color:#6c6e79">+2</span>
<svg class="i" style="left:1344px;top:606px" width="25" height="4" viewBox="0 0 25 4"><path d="M1.2 1.9 H23.4" stroke="#b0b2ba" stroke-width="1.3" stroke-dasharray="2.1 1.6" fill="none"/></svg>
<span class="t" style="left:1481.04px;top:586px;letter-spacing:0.393px">3 weeks</span>
<svg class="i" style="left:1552.5px;top:584.3px" width="20" height="20" viewBox="0 0 20 20"><path d="M16.1 6.2 A7.1 7.1 0 1 0 17 10.4" fill="none" stroke="#006dca" stroke-width="2.3" stroke-linecap="round"/><path d="M17 1.9 V6.8 H12.1" fill="none" stroke="#006dca" stroke-width="2.3" stroke-linecap="round" stroke-linejoin="round"/></svg>
<div class="b" style="left:284px;top:696.5px;width:1312px;height:1px;background:#e3e4ea"></div>
<svg class="i" style="left:306px;top:659px" width="25" height="26" viewBox="306 659 25 26"><rect x="309" y="662.1" width="18.2" height="18.4" rx="4" fill="#fff" stroke="#d3d5dc" stroke-width="1"/></svg>
<svg class="i" style="left:346.6px;top:661.4px" width="20" height="20" viewBox="0 0 20 20"><circle cx="10" cy="10" r="8.45" fill="none" stroke="#a7a8af" stroke-width="1.9"/><path d="M10 5.5 V14.5 M5.5 10 H14.5" stroke="#a7a8af" stroke-width="1.9" fill="none"/></svg>
<span class="t" style="left:371.58px;top:663px;letter-spacing:0.222px;color:#006dca">bee keeping age</span>
<svg class="i" style="left:510.3px;top:664.3px" width="16" height="15" viewBox="0 0 16 15"><rect x="1.2" y="1.3" width="13.6" height="12.4" fill="none" stroke="#a7a8af" stroke-width="2.1"/><path d="M1 6.4 H15" stroke="#a7a8af" stroke-width="2"/><path d="M11.2 1.3 V6.4" stroke="#a7a8af" stroke-width="1.9"/></svg>
<svg class="i" style="left:779px;top:659px" width="26" height="25" viewBox="779 659 26 25"><rect x="781.8" y="661.6" width="19.5" height="18.8" rx="3.5" fill="#c4e5fe"/></svg>
<span class="t" style="left:789.16px;top:663px;font-size:14px;letter-spacing:0.783px;color:#006dca;font-weight:700;-webkit-text-stroke:0">I</span>
<span class="t" style="left:926.67px;top:663px;letter-spacing:0.016px">1,300</span>
<span class="t" style="left:1022.34px;top:663px;letter-spacing:1.273px">36</span>
<svg class="i" style="left:1050px;top:661px" width="20" height="20" viewBox="-10 -10 20 20"><circle cx="0.2" cy="0.3" r="7.25" fill="#fdc23c"/></svg>
<span class="t" style="left:1133.32px;top:663px;letter-spacing:0.798px">0.00</span>
<svg class="i" style="left:1189.0px;top:663.7px" width="19" height="16" viewBox="0 0 19 16"><path d="M7.6 14.1 H1.4 V1.6 H17.3 V5" fill="none" stroke="#a7a8af" stroke-width="2"/><path d="M0.4 1.6 H18.3" stroke="#a7a8af" stroke-width="3" fill="none"/><circle cx="12.9" cy="9.9" r="2.9" fill="none" stroke="#a7a8af" stroke-width="2"/><path d="M15.1 12.2 L17.6 14.7" stroke="#a7a8af" stroke-width="2.1" stroke-linecap="round"/></svg>
<div class="b" style="left:1218.3px;top:658.5px;width:1px;height:24.5px;background:#d1d4db"></div>
<svg class="i" style="left:1228.1px;top:661.2px" width="20" height="20" viewBox="0 0 20 20"><path d="M1.9 7.4 L6.3 10.4 L10 3 L13.7 10.4 L18.1 7.4 L15.5 14.4 H4.5 Z" fill="none" stroke="#a7a8af" stroke-width="2" stroke-linejoin="round"/><path d="M4.2 17.8 H15.8" stroke="#a7a8af" stroke-width="2"/></svg>
<svg class="i" style="left:1257.32px;top:665.2px" width="20" height="12" viewBox="0 0 20 12"><path d="M8.4 1.4 H6.2 A4.6 4.6 0 0 0 6.2 10.6 H8.4 M11.6 1.4 H13.8 A4.6 4.6 0 0 1 13.8 10.6 H11.6 M7.8 6 H12.2" fill="none" stroke="#a7a8af" stroke-width="2.2" stroke-linecap="round"/></svg>
<svg class="i" style="left:1286.54px;top:661.2px" width="20" height="20" viewBox="-9.6 -9.6 19.2 19.2"><path d="M0.0 -7.7 L1.2 -7.4 L2.1 -6.5 L2.8 -5.4 L3.2 -4.4 L3.7 -3.7 L4.4 -3.2 L5.4 -2.8 L6.5 -2.1 L7.4 -1.2 L7.7 0 L7.4 1.2 L6.5 2.1 L5.4 2.8 L4.4 3.2 L3.7 3.7 L3.2 4.4 L2.8 5.4 L2.1 6.5 L1.2 7.4 L0.0 7.7 L-1.2 7.4 L-2.1 6.5 L-2.8 5.4 L-3.2 4.4 L-3.7 3.7 L-4.4 3.2 L-5.4 2.8 L-6.5 2.1 L-7.4 1.2 L-7.7 0.0 L-7.4 -1.2 L-6.5 -2.1 L-5.4 -2.8 L-4.4 -3.2 L-3.7 -3.7 L-3.2 -4.4 L-2.8 -5.4 L-2.1 -6.5 L-1.2 -7.4 Z" fill="none" stroke="#a7a8af" stroke-width="3.4" stroke-linejoin="round"/></svg>
<svg class="i" style="left:1315.76px;top:661.2px" width="20" height="20" viewBox="0 0 20 20"><path d="M10 2.3 L12.3 7.5 L17.9 8.1 L13.7 11.9 L14.9 17.4 L10 14.6 L5.1 17.4 L6.3 11.9 L2.1 8.1 L7.7 7.5 Z" fill="none" stroke="#a7a8af" stroke-width="2" stroke-linejoin="round"/></svg>
<span class="t" style="left:1345.15px;top:664px;letter-spacing:1.121px;color:#6c6e79">+4</span>
<svg class="i" style="left:1344px;top:683px" width="25" height="4" viewBox="0 0 25 4"><path d="M1.2 1.9 H23.4" stroke="#b0b2ba" stroke-width="1.3" stroke-dasharray="2.1 1.6" fill="none"/></svg>
<span class="t" style="left:1480.82px;top:663px;letter-spacing:0.429px">2 weeks</span>
<svg class="i" style="left:1552.5px;top:661.3px" width="20" height="20" viewBox="0 0 20 20"><path d="M16.1 6.2 A7.1 7.1 0 1 0 17 10.4" fill="none" stroke="#006dca" stroke-width="2.3" stroke-linecap="round"/><path d="M17 1.9 V6.8 H12.1" fill="none" stroke="#006dca" stroke-width="2.3" stroke-linecap="round" stroke-linejoin="round"/></svg>
<div class="b" style="left:284px;top:749.5px;width:1312px;height:1px;background:#e3e4ea"></div>
<svg class="i" style="left:306px;top:712px" width="25" height="26" viewBox="306 712 25 26"><rect x="309" y="715.1" width="18.2" height="18.4" rx="4" fill="#fff" stroke="#d3d5dc" stroke-width="1"/></svg>
<svg class="i" style="left:346.6px;top:714.4px" width="20" height="20" viewBox="0 0 20 20"><circle cx="10" cy="10" r="8.45" fill="none" stroke="#a7a8af" stroke-width="1.9"/><path d="M10 5.5 V14.5 M5.5 10 H14.5" stroke="#a7a8af" stroke-width="1.9" fill="none"/></svg>
<span class="t" style="left:371.49px;top:716px;letter-spacing:0.348px;color:#006dca">how to keep bees off hummingbird feeder</span>
<svg class="i" style="left:712.3px;top:717.3px" width="16" height="15" viewBox="0 0 16 15"><rect x="1.2" y="1.3" width="13.6" height="12.4" fill="none" stroke="#a7a8af" stroke-width="2.1"/><path d="M1 6.4 H15" stroke="#a7a8af" stroke-width="2"/><path d="M11.2 1.3 V6.4" stroke="#a7a8af" stroke-width="1.9"/></svg>
<svg class="i" style="left:779px;top:712px" width="26" height="25" viewBox="779 712 26 25"><rect x="781.8" y="714.6" width="19.5" height="18.8" rx="3.5" fill="#c4e5fe"/></svg>
<span class="t" style="left:789.16px;top:716px;font-size:14px;letter-spacing:0.783px;color:#006dca;font-weight:700;-webkit-text-stroke:0">I</span>
<span class="t" style="left:926.67px;top:716px;letter-spacing:0.016px">1,300</span>
<span class="t" style="left:1022.12px;top:716px;letter-spacing:1.401px">20</span>
<svg class="i" style="left:1050px;top:714px" width="20" height="20" viewBox="-10 -10 20 20"><circle cx="0.2" cy="0.3" r="7.25" fill="#59ddaa"/></svg>
<span class="t" style="left:1138.82px;top:716px;letter-spacing:-1.018px">0.15</span>
<svg class="i" style="left:1189.0px;top:716.7px" width="19" height="16" viewBox="0 0 19 16"><path d="M7.6 14.1 H1.4 V1.6 H17.3 V5" fill="none" stroke="#a7a8af" stroke-width="2"/><path d="M0.4 1.6 H18.3" stroke="#a7a8af" stroke-width="3" fill="none"/><circle cx="12.9" cy="9.9" r="2.9" fill="none" stroke="#a7a8af" stroke-width="2"/><path d="M15.1 12.2 L17.6 14.7" stroke="#a7a8af" stroke-width="2.1" stroke-linecap="round"/></svg>
<div class="b" style="left:1218.3px;top:711.5px;width:1px;height:24.5px;background:#d1d4db"></div>
<svg class="i" style="left:1228.1px;top:718.2px" width="20" height="12" viewBox="0 0 20 12"><path d="M8.4 1.4 H6.2 A4.6 4.6 0 0 0 6.2 10.6 H8.4 M11.6 1.4 H13.8 A4.6 4.6 0 0 1 13.8 10.6 H11.6 M7.8 6 H12.2" fill="none" stroke="#a7a8af" stroke-width="2.2" stroke-linecap="round"/></svg>
<svg class="i" style="left:1257.32px;top:714.2px" width="20" height="20" viewBox="-9.6 -9.6 19.2 19.2"><path d="M0.0 -7.7 L1.2 -7.4 L2.1 -6.5 L2.8 -5.4 L3.2 -4.4 L3.7 -3.7 L4.4 -3.2 L5.4 -2.8 L6.5 -2.1 L7.4 -1.2 L7.7 0 L7.4 1.2 L6.5 2.1 L5.4 2.8 L4.4 3.2 L3.7 3.7 L3.2 4.4 L2.8 5.4 L2.1 6.5 L1.2 7.4 L0.0 7.7 L-1.2 7.4 L-2.1 6.5 L-2.8 5.4 L-3.2 4.4 L-3.7 3.7 L-4.4 3.2 L-5.4 2.8 L-6.5 2.1 L-7.4 1.2 L-7.7 0.0 L-7.4 -1.2 L-6.5 -2.1 L-5.4 -2.8 L-4.4 -3.2 L-3.7 -3.7 L-3.2 -4.4 L-2.8 -5.4 L-2.1 -6.5 L-1.2 -7.4 Z" fill="none" stroke="#a7a8af" stroke-width="3.4" stroke-linejoin="round"/></svg>
<svg class="i" style="left:1286.54px;top:714.2px" width="20" height="20" viewBox="0 0 20 20"><path d="M10 2.3 L12.3 7.5 L17.9 8.1 L13.7 11.9 L14.9 17.4 L10 14.6 L5.1 17.4 L6.3 11.9 L2.1 8.1 L7.7 7.5 Z" fill="none" stroke="#a7a8af" stroke-width="2" stroke-linejoin="round"/></svg>
<svg class="i" style="left:1315.76px;top:714.2px" width="20" height="20" viewBox="0 0 20 20"><rect x="1.5" y="3.2" width="13.6" height="12.4" fill="none" stroke="#a7a8af" stroke-width="2"/><path d="M2.4 14 L6.4 10 L8.8 12.4 L13.2 7.4 L14.6 8.8" fill="none" stroke="#a7a8af" stroke-width="1.8"/><circle cx="5.6" cy="6.9" r="1.3" fill="#a7a8af"/><path d="M4.4 18.4 H18.2 V6.2" fill="none" stroke="#a7a8af" stroke-width="1.9"/></svg>
<span class="t" style="left:1345.15px;top:717px;letter-spacing:1.376px;color:#6c6e79">+3</span>
<svg class="i" style="left:1344px;top:736px" width="25" height="4" viewBox="0 0 25 4"><path d="M1.2 1.9 H23.4" stroke="#b0b2ba" stroke-width="1.3" stroke-dasharray="2.1 1.6" fill="none"/></svg>
<span class="t" style="left:1481.04px;top:716px;letter-spacing:0.393px">3 weeks</span>
<svg class="i" style="left:1552.5px;top:714.3px" width="20" height="20" viewBox="0 0 20 20"><path d="M16.1 6.2 A7.1 7.1 0 1 0 17 10.4" fill="none" stroke="#006dca" stroke-width="2.3" stroke-linecap="round"/><path d="M17 1.9 V6.8 H12.1" fill="none" stroke="#006dca" stroke-width="2.3" stroke-linecap="round" stroke-linejoin="round"/></svg>
<div class="b" style="left:284px;top:803.0px;width:1312px;height:1px;background:#e3e4ea"></div>
<svg class="i" style="left:306px;top:766px" width="25" height="25" viewBox="306 766 25 25"><rect x="309" y="768.6" width="18.2" height="18.4" rx="4" fill="#fff" stroke="#d3d5dc" stroke-width="1"/></svg>
<svg class="i" style="left:346.6px;top:767.9px" width="20" height="20" viewBox="0 0 20 20"><circle cx="10" cy="10" r="8.45" fill="none" stroke="#a7a8af" stroke-width="1.9"/><path d="M10 5.5 V14.5 M5.5 10 H14.5" stroke="#a7a8af" stroke-width="1.9" fill="none"/></svg>
<span class="t" style="left:371.49px;top:770px;letter-spacing:0.298px;color:#006dca">how to keep carpenter bees away</span>
<svg class="i" style="left:648.3px;top:770.8px" width="16" height="15" viewBox="0 0 16 15"><rect x="1.2" y="1.3" width="13.6" height="12.4" fill="none" stroke="#a7a8af" stroke-width="2.1"/><path d="M1 6.4 H15" stroke="#a7a8af" stroke-width="2"/><path d="M11.2 1.3 V6.4" stroke="#a7a8af" stroke-width="1.9"/></svg>
<svg class="i" style="left:779px;top:766px" width="26" height="24" viewBox="779 766 26 24"><rect x="781.8" y="768.1" width="19.5" height="18.8" rx="3.5" fill="#c4e5fe"/></svg>
<span class="t" style="left:789.16px;top:770px;font-size:14px;letter-spacing:0.783px;color:#006dca;font-weight:700;-webkit-text-stroke:0">I</span>
<span class="t" style="left:926.67px;top:770px;letter-spacing:0.016px">1,300</span>
<span class="t" style="left:1022.62px;top:770px;letter-spacing:0.952px">25</span>
<svg class="i" style="left:1050px;top:767.5px" width="20" height="20" viewBox="-10 -10 20 20"><circle cx="0.2" cy="0.3" r="7.25" fill="#59ddaa"/></svg>
<span class="t" style="left:1134.82px;top:770px;letter-spacing:0.363px">0.57</span>
<svg class="i" style="left:1189.0px;top:770.2px" width="19" height="16" viewBox="0 0 19 16"><path d="M7.6 14.1 H1.4 V1.6 H17.3 V5" fill="none" stroke="#a7a8af" stroke-width="2"/><path d="M0.4 1.6 H18.3" stroke="#a7a8af" stroke-width="3" fill="none"/><circle cx="12.9" cy="9.9" r="2.9" fill="none" stroke="#a7a8af" stroke-width="2"/><path d="M15.1 12.2 L17.6 14.7" stroke="#a7a8af" stroke-width="2.1" stroke-linecap="round"/></svg>
<div class="b" style="left:1218.3px;top:765.0px;width:1px;height:24.5px;background:#d1d4db"></div>
<svg class="i" style="left:1228.1px;top:771.7px" width="20" height="12" viewBox="0 0 20 12"><path d="M8.4 1.4 H6.2 A4.6 4.6 0 0 0 6.2 10.6 H8.4 M11.6 1.4 H13.8 A4.6 4.6 0 0 1 13.8 10.6 H11.6 M7.8 6 H12.2" fill="none" stroke="#a7a8af" stroke-width="2.2" stroke-linecap="round"/></svg>
<svg class="i" style="left:1257.32px;top:767.7px" width="20" height="20" viewBox="-9.6 -9.6 19.2 19.2"><path d="M0.0 -7.7 L1.2 -7.4 L2.1 -6.5 L2.8 -5.4 L3.2 -4.4 L3.7 -3.7 L4.4 -3.2 L5.4 -2.8 L6.5 -2.1 L7.4 -1.2 L7.7 0 L7.4 1.2 L6.5 2.1 L5.4 2.8 L4.4 3.2 L3.7 3.7 L3.2 4.4 L2.8 5.4 L2.1 6.5 L1.2 7.4 L0.0 7.7 L-1.2 7.4 L-2.1 6.5 L-2.8 5.4 L-3.2 4.4 L-3.7 3.7 L-4.4 3.2 L-5.4 2.8 L-6.5 2.1 L-7.4 1.2 L-7.7 0.0 L-7.4 -1.2 L-6.5 -2.1 L-5.4 -2.8 L-4.4 -3.2 L-3.7 -3.7 L-3.2 -4.4 L-2.8 -5.4 L-2.1 -6.5 L-1.2 -7.4 Z" fill="none" stroke="#a7a8af" stroke-width="3.4" stroke-linejoin="round"/></svg>
<svg class="i" style="left:1286.54px;top:767.7px" width="20" height="20" viewBox="0 0 20 20"><path d="M10 2.3 L12.3 7.5 L17.9 8.1 L13.7 11.9 L14.9 17.4 L10 14.6 L5.1 17.4 L6.3 11.9 L2.1 8.1 L7.7 7.5 Z" fill="none" stroke="#a7a8af" stroke-width="2" stroke-linejoin="round"/></svg>
<svg class="i" style="left:1315.76px;top:767.7px" width="20" height="20" viewBox="0 0 20 20"><circle cx="10" cy="10" r="7.4" fill="none" stroke="#a7a8af" stroke-width="2"/><path d="M7.9 6.2 L13.7 10 L7.9 13.8 Z" fill="#a7a8af" stroke="#a7a8af" stroke-width="0.6" stroke-linejoin="round"/></svg>
<span class="t" style="left:1345.15px;top:771px;letter-spacing:1.486px;color:#6c6e79">+2</span>
<svg class="i" style="left:1344px;top:789.5px" width="25" height="4" viewBox="0 0 25 4"><path d="M1.2 1.9 H23.4" stroke="#b0b2ba" stroke-width="1.3" stroke-dasharray="2.1 1.6" fill="none"/></svg>
<span class="t" style="left:1480.82px;top:770px;letter-spacing:0.429px">2 weeks</span>
<svg class="i" style="left:1552.5px;top:767.8px" width="20" height="20" viewBox="0 0 20 20"><path d="M16.1 6.2 A7.1 7.1 0 1 0 17 10.4" fill="none" stroke="#006dca" stroke-width="2.3" stroke-linecap="round"/><path d="M17 1.9 V6.8 H12.1" fill="none" stroke="#006dca" stroke-width="2.3" stroke-linecap="round" stroke-linejoin="round"/></svg>
<div class="b" style="left:284px;top:856.0px;width:1312px;height:1px;background:#e3e4ea"></div>
<svg class="i" style="left:306px;top:819px" width="25" height="25" viewBox="306 819 25 25"><rect x="309" y="821.6" width="18.2" height="18.4" rx="4" fill="#fff" stroke="#d3d5dc" stroke-width="1"/></svg>
<svg class="i" style="left:346.6px;top:820.9px" width="20" height="20" viewBox="0 0 20 20"><circle cx="10" cy="10" r="8.45" fill="none" stroke="#a7a8af" stroke-width="1.9"/><path d="M10 5.5 V14.5 M5.5 10 H14.5" stroke="#a7a8af" stroke-width="1.9" fill="none"/></svg>
<span class="t" style="left:372.03px;top:823px;letter-spacing:0.214px;color:#006dca">what keeps bees away</span>
<svg class="i" style="left:559.8px;top:823.8px" width="16" height="15" viewBox="0 0 16 15"><rect x="1.2" y="1.3" width="13.6" height="12.4" fill="none" stroke="#a7a8af" stroke-width="2.1"/><path d="M1 6.4 H15" stroke="#a7a8af" stroke-width="2"/><path d="M11.2 1.3 V6.4" stroke="#a7a8af" stroke-width="1.9"/></svg>
<svg class="i" style="left:779px;top:819px" width="26" height="24" viewBox="779 819 26 24"><rect x="781.8" y="821.1" width="19.5" height="18.8" rx="3.5" fill="#c4e5fe"/></svg>
<span class="t" style="left:789.16px;top:823px;font-size:14px;letter-spacing:0.783px;color:#006dca;font-weight:700;-webkit-text-stroke:0">I</span>
<span class="t" style="left:926.67px;top:823px;letter-spacing:0.016px">1,300</span>
<span class="t" style="left:1024.90px;top:823px;letter-spacing:-1.200px">11</span>
<svg class="i" style="left:1050px;top:820.5px" width="20" height="20" viewBox="-10 -10 20 20"><circle cx="0.2" cy="0.3" r="7.25" fill="#009f81"/></svg>
<span class="t" style="left:1134.32px;top:823px;letter-spacing:0.530px">0.92</span>
<svg class="i" style="left:1189.0px;top:823.2px" width="19" height="16" viewBox="0 0 19 16"><path d="M7.6 14.1 H1.4 V1.6 H17.3 V5" fill="none" stroke="#a7a8af" stroke-width="2"/><path d="M0.4 1.6 H18.3" stroke="#a7a8af" stroke-width="3" fill="none"/><circle cx="12.9" cy="9.9" r="2.9" fill="none" stroke="#a7a8af" stroke-width="2"/><path d="M15.1 12.2 L17.6 14.7" stroke="#a7a8af" stroke-width="2.1" stroke-linecap="round"/></svg>
<div class="b" style="left:1218.3px;top:818.0px;width:1px;height:24.5px;background:#d1d4db"></div>
<svg class="i" style="left:1228.1px;top:824.7px" width="20" height="12" viewBox="0 0 20 12"><path d="M8.4 1.4 H6.2 A4.6 4.6 0 0 0 6.2 10.6 H8.4 M11.6 1.4 H13.8 A4.6 4.6 0 0 1 13.8 10.6 H11.6 M7.8 6 H12.2" fill="none" stroke="#a7a8af" stroke-width="2.2" stroke-linecap="round"/></svg>
<svg class="i" style="left:1257.32px;top:820.7px" width="20" height="20" viewBox="-9.6 -9.6 19.2 19.2"><path d="M0.0 -7.7 L1.2 -7.4 L2.1 -6.5 L2.8 -5.4 L3.2 -4.4 L3.7 -3.7 L4.4 -3.2 L5.4 -2.8 L6.5 -2.1 L7.4 -1.2 L7.7 0 L7.4 1.2 L6.5 2.1 L5.4 2.8 L4.4 3.2 L3.7 3.7 L3.2 4.4 L2.8 5.4 L2.1 6.5 L1.2 7.4 L0.0 7.7 L-1.2 7.4 L-2.1 6.5 L-2.8 5.4 L-3.2 4.4 L-3.7 3.7 L-4.4 3.2 L-5.4 2.8 L-6.5 2.1 L-7.4 1.2 L-7.7 0.0 L-7.4 -1.2 L-6.5 -2.1 L-5.4 -2.8 L-4.4 -3.2 L-3.7 -3.7 L-3.2 -4.4 L-2.8 -5.4 L-2.1 -6.5 L-1.2 -7.4 Z" fill="none" stroke="#a7a8af" stroke-width="3.4" stroke-linejoin="round"/></svg>
<svg class="i" style="left:1286.54px;top:820.7px" width="20" height="20" viewBox="0 0 20 20"><path d="M10 2.3 L12.3 7.5 L17.9 8.1 L13.7 11.9 L14.9 17.4 L10 14.6 L5.1 17.4 L6.3 11.9 L2.1 8.1 L7.7 7.5 Z" fill="none" stroke="#a7a8af" stroke-width="2" stroke-linejoin="round"/></svg>
<svg class="i" style="left:1315.76px;top:820.7px" width="20" height="20" viewBox="0 0 20 20"><rect x="1.5" y="3.2" width="13.6" height="12.4" fill="none" stroke="#a7a8af" stroke-width="2"/><path d="M2.4 14 L6.4 10 L8.8 12.4 L13.2 7.4 L14.6 8.8" fill="none" stroke="#a7a8af" stroke-width="1.8"/><circle cx="5.6" cy="6.9" r="1.3" fill="#a7a8af"/><path d="M4.4 18.4 H18.2 V6.2" fill="none" stroke="#a7a8af" stroke-width="1.9"/></svg>
<span class="t" style="left:1345.15px;top:824px;letter-spacing:1.121px;color:#6c6e79">+4</span>
<svg class="i" style="left:1344px;top:842.5px" width="25" height="4" viewBox="0 0 25 4"><path d="M1.2 1.9 H23.4" stroke="#b0b2ba" stroke-width="1.3" stroke-dasharray="2.1 1.6" fill="none"/></svg>
<span class="t" style="left:1480.82px;top:823px;letter-spacing:0.429px">2 weeks</span>
<svg class="i" style="left:1552.5px;top:820.8px" width="20" height="20" viewBox="0 0 20 20"><path d="M16.1 6.2 A7.1 7.1 0 1 0 17 10.4" fill="none" stroke="#006dca" stroke-width="2.3" stroke-linecap="round"/><path d="M17 1.9 V6.8 H12.1" fill="none" stroke="#006dca" stroke-width="2.3" stroke-linecap="round" stroke-linejoin="round"/></svg>
<div class="b" style="left:284px;top:909.0px;width:1312px;height:1px;background:#e3e4ea"></div>
<svg class="i" style="left:306px;top:872px" width="25" height="25" viewBox="306 872 25 25"><rect x="309" y="874.6" width="18.2" height="18.4" rx="4" fill="#fff" stroke="#d3d5dc" stroke-width="1"/></svg>
<svg class="i" style="left:346.6px;top:873.9px" width="20" height="20" viewBox="0 0 20 20"><circle cx="10" cy="10" r="8.45" fill="none" stroke="#a7a8af" stroke-width="1.9"/><path d="M10 5.5 V14.5 M5.5 10 H14.5" stroke="#a7a8af" stroke-width="1.9" fill="none"/></svg>
<span class="t" style="left:371.58px;top:876px;letter-spacing:0.310px;color:#006dca">bee keeping for beginners</span>
<svg class="i" style="left:587.3px;top:876.8px" width="16" height="15" viewBox="0 0 16 15"><rect x="1.2" y="1.3" width="13.6" height="12.4" fill="none" stroke="#a7a8af" stroke-width="2.1"/><path d="M1 6.4 H15" stroke="#a7a8af" stroke-width="2"/><path d="M11.2 1.3 V6.4" stroke="#a7a8af" stroke-width="1.9"/></svg>
<svg class="i" style="left:779px;top:872px" width="26" height="24" viewBox="779 872 26 24"><rect x="781.8" y="874.1" width="19.5" height="18.8" rx="3.5" fill="#c4e5fe"/></svg>
<span class="t" style="left:789.16px;top:876px;font-size:14px;letter-spacing:0.783px;color:#006dca;font-weight:700;-webkit-text-stroke:0">I</span>
<span class="t" style="left:926.67px;top:876px;letter-spacing:0.016px">1,000</span>
<span class="t" style="left:1022.60px;top:876px;letter-spacing:1.120px">42</span>
<svg class="i" style="left:1050px;top:873.5px" width="20" height="20" viewBox="-10 -10 20 20"><circle cx="0.2" cy="0.3" r="7.25" fill="#fdc23c"/></svg>
<span class="t" style="left:1134.32px;top:876px;letter-spacing:0.513px">0.29</span>
<svg class="i" style="left:1189.0px;top:876.2px" width="19" height="16" viewBox="0 0 19 16"><path d="M7.6 14.1 H1.4 V1.6 H17.3 V5" fill="none" stroke="#a7a8af" stroke-width="2"/><path d="M0.4 1.6 H18.3" stroke="#a7a8af" stroke-width="3" fill="none"/><circle cx="12.9" cy="9.9" r="2.9" fill="none" stroke="#a7a8af" stroke-width="2"/><path d="M15.1 12.2 L17.6 14.7" stroke="#a7a8af" stroke-width="2.1" stroke-linecap="round"/></svg>
<div class="b" style="left:1218.3px;top:871.0px;width:1px;height:24.5px;background:#d1d4db"></div>
<svg class="i" style="left:1228.1px;top:877.7px" width="20" height="12" viewBox="0 0 20 12"><path d="M8.4 1.4 H6.2 A4.6 4.6 0 0 0 6.2 10.6 H8.4 M11.6 1.4 H13.8 A4.6 4.6 0 0 1 13.8 10.6 H11.6 M7.8 6 H12.2" fill="none" stroke="#a7a8af" stroke-width="2.2" stroke-linecap="round"/></svg>
<svg class="i" style="left:1257.32px;top:873.7px" width="20" height="20" viewBox="-9.6 -9.6 19.2 19.2"><path d="M0.0 -7.7 L1.2 -7.4 L2.1 -6.5 L2.8 -5.4 L3.2 -4.4 L3.7 -3.7 L4.4 -3.2 L5.4 -2.8 L6.5 -2.1 L7.4 -1.2 L7.7 0 L7.4 1.2 L6.5 2.1 L5.4 2.8 L4.4 3.2 L3.7 3.7 L3.2 4.4 L2.8 5.4 L2.1 6.5 L1.2 7.4 L0.0 7.7 L-1.2 7.4 L-2.1 6.5 L-2.8 5.4 L-3.2 4.4 L-3.7 3.7 L-4.4 3.2 L-5.4 2.8 L-6.5 2.1 L-7.4 1.2 L-7.7 0.0 L-7.4 -1.2 L-6.5 -2.1 L-5.4 -2.8 L-4.4 -3.2 L-3.7 -3.7 L-3.2 -4.4 L-2.8 -5.4 L-2.1 -6.5 L-1.2 -7.4 Z" fill="none" stroke="#a7a8af" stroke-width="3.4" stroke-linejoin="round"/></svg>
<svg class="i" style="left:1286.54px;top:873.7px" width="20" height="20" viewBox="0 0 20 20"><rect x="2.1" y="3.5" width="15.8" height="13" rx="0.8" fill="none" stroke="#a7a8af" stroke-width="2"/><path d="M3 15.6 V14.2 L7.4 10 L10.2 12.6 L13.4 8.8 L17 12.6 V15.6 Z" fill="#a7a8af"/><circle cx="6.6" cy="7.1" r="1.3" fill="#a7a8af"/></svg>
<svg class="i" style="left:1315.76px;top:873.7px" width="20" height="20" viewBox="0 0 20 20"><circle cx="10" cy="10" r="7.4" fill="none" stroke="#a7a8af" stroke-width="2"/><path d="M7.9 6.2 L13.7 10 L7.9 13.8 Z" fill="#a7a8af" stroke="#a7a8af" stroke-width="0.6" stroke-linejoin="round"/></svg>
<span class="t" style="left:1345.15px;top:877px;letter-spacing:1.376px;color:#6c6e79">+3</span>
<svg class="i" style="left:1344px;top:895.5px" width="25" height="4" viewBox="0 0 25 4"><path d="M1.2 1.9 H23.4" stroke="#b0b2ba" stroke-width="1.3" stroke-dasharray="2.1 1.6" fill="none"/></svg>
<span class="t" style="left:1480.60px;top:876px;letter-spacing:0.466px">4 weeks</span>
<svg class="i" style="left:1552.5px;top:873.8px" width="20" height="20" viewBox="0 0 20 20"><path d="M16.1 6.2 A7.1 7.1 0 1 0 17 10.4" fill="none" stroke="#006dca" stroke-width="2.3" stroke-linecap="round"/><path d="M17 1.9 V6.8 H12.1" fill="none" stroke="#006dca" stroke-width="2.3" stroke-linecap="round" stroke-linejoin="round"/></svg>
<svg class="i" style="left:1120px;top:475px" width="300" height="110" viewBox="1120 475 300 110"><rect x="1136.5" y="487.2" width="259.5" height="83.9" rx="15" fill="#c17cfb" style="filter:drop-shadow(0 2px 4px rgba(25,27,35,0.12))"/><rect x="1143.3" y="493.9" width="246" height="70.4" rx="8.5" fill="#fff"/></svg>
<svg class="i" style="left:1259px;top:570px" width="16" height="7" viewBox="0 0 16 7"><path d="M2 0 L8 5.5 L14 0 Z" fill="#fff"/></svg>
<span class="t" style="left:1157.27px;top:512px;letter-spacing:-0.052px;font-weight:700;-webkit-text-stroke:0">AI Overview</span>
<span class="t" style="left:1157.67px;top:537px;letter-spacing:0.248px">An answer generated by AI.</span>
<svg class="i" style="left:1260px;top:600px" width="100" height="60" viewBox="1260 600 100 60"><path d="M1346.5 617.5 C1336 634 1312 656 1287 644" fill="none" stroke="#c17cfb" stroke-width="7.3" stroke-linecap="butt"/><path d="M1271.5 611 L1271.5 652 L1305 635.5 Z" fill="#c17cfb"/></svg>
</div>
</body></html>
